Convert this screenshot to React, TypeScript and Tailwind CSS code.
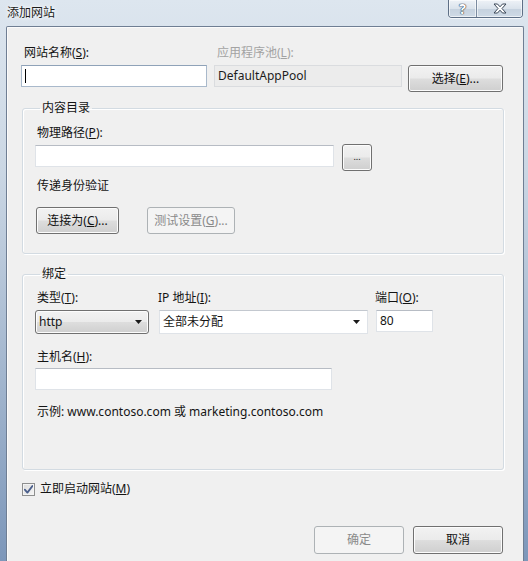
import React from "react";

const FONT = "font-['Noto_Sans','Noto_Sans_CJK_SC',sans-serif]";

function Btn({
  children,
  className = "",
  disabled = false,
}: {
  children: React.ReactNode;
  className?: string;
  disabled?: boolean;
}) {
  const base =
    "flex items-center justify-center rounded-[3px] border text-[12px] leading-[16px] ";
  const look = disabled
    ? "border-[#adb2b5] bg-[#f4f4f4] text-[#8a8a8a]"
    : "border-[#707070] bg-[linear-gradient(to_bottom,#f2f2f2_0%,#ebebeb_48%,#dddddd_52%,#cfcfcf_100%)] shadow-[inset_0_0_0_1px_#fcfcfc] text-[#111]";
  return <div className={base + look + " " + className}>{children}</div>;
}

function Arrow() {
  return (
    <svg width="7" height="4" viewBox="0 0 7 4" className="block">
      <path d="M0 0 H7 L3.5 4 Z" fill="#1a1a1a" />
    </svg>
  );
}

function Field({ className = "", children }: { className?: string; children?: React.ReactNode }) {
  return (
    <div
      className={
        "h-[22px] border border-[#dfe3e8] border-t-[#b7bcc4] bg-white text-[12px] leading-[20px] pl-[3px] " +
        className
      }
    >
      {children}
    </div>
  );
}

function Label({ children, className = "" }: { children: React.ReactNode; className?: string }) {
  return <div className={"text-[12px] leading-[16px] " + className}>{children}</div>;
}

export default function App() {
  return (
    <div
      className={
        FONT +
        " relative w-[528px] h-[561px] overflow-hidden flex flex-col text-[#141414] bg-[linear-gradient(to_bottom,#dde6ef_0%,#cbd7e4_30%,#9fb3cc_70%,#7d97ba_100%)]"
      }
    >
      {/* title bar */}
      <div className="h-[26px] flex items-start shrink-0">
        <div className="pl-[7px] pt-[5px] text-[12px] leading-[16px] text-[#1b1b1b] [text-shadow:0_0_6px_#ffffff,0_0_3px_#ffffff]">
          添加网站
        </div>
        <div className="ml-auto mr-[5px] flex h-[18px] rounded-b-[4px] border border-t-0 border-[#5e6f86] overflow-hidden shadow-[0_1px_0_#f4f7fb]">
          <div className="w-[28px] h-full flex items-center justify-center bg-[linear-gradient(to_bottom,#eef2f7_0%,#dbe3ec_50%,#c5d1de_51%,#cfdae6_100%)] border-r border-[#7b8ba0] shadow-[inset_0_0_0_1px_rgba(255,255,255,0.6)]">
            <span className="text-[14px] font-bold leading-none text-white [text-shadow:0_0_1px_#2f3b4b,0_0_1px_#2f3b4b,0_0_1px_#2f3b4b]">
              ?
            </span>
          </div>
          <div className="w-[45px] h-full flex items-center justify-center bg-[linear-gradient(to_bottom,#eef2f7_0%,#dbe3ec_50%,#c5d1de_51%,#cfdae6_100%)] shadow-[inset_0_0_0_1px_rgba(255,255,255,0.6)]">
            <svg width="14" height="11" viewBox="0 0 14 11">
              <path
                d="M1 1 H4.5 L7 3.8 L9.5 1 H13 L9 5.5 L13 10 H9.5 L7 7.2 L4.5 10 H1 L5 5.5 Z"
                fill="#ffffff"
                stroke="#3a4657"
                strokeWidth="1"
                strokeLinejoin="round"
              />
            </svg>
          </div>
        </div>
      </div>

      <div className="flex flex-1 min-h-0">
        <div className="w-[6px] shrink-0" />
        {/* client area */}
        <div className="flex-1 bg-[#f0f0f0] border border-b-0 border-[#6f7e93] rounded-t-[2px] shadow-[inset_1px_1px_0_#fbfbfb] pl-[14px] pr-[19px] pt-[18px]">
          {/* site name / app pool */}
          <div className="flex items-start">
            <div className="w-[186px]">
              <Label className="ml-[3px]">
                网站名称(<span className="underline">S</span>):
              </Label>
              <div className="mt-[4px] h-[22px] border border-[#a9b9cb] border-t-[#8fa2b8] bg-white flex items-center pl-[3px]">
                <div className="w-[1px] h-[14px] bg-black" />
              </div>
            </div>
            <div className="ml-[7px] w-[188px]">
              <Label className="ml-[3px] text-[#a3a3a3]">
                应用程序池(<span className="underline">L</span>):
              </Label>
              <div className="mt-[4px] h-[22px] border border-[#dadcdf] bg-[#ececec] pl-[3px] text-[12px] leading-[20px] text-[#1c1c1c]">
                DefaultAppPool
              </div>
            </div>
            <Btn className="ml-[6px] mt-[20px] w-[95px] h-[27px]">
              选择(<span className="underline">E</span>)...
            </Btn>
          </div>

          {/* content directory */}
          <fieldset className="mt-[8px] ml-[1px] border border-[#d3dbe2] rounded-[3px] shadow-[inset_1px_1px_0_#ffffff,1px_1px_0_#ffffff] px-[12px] pt-[9px] pb-[19px]">
            <legend className="ml-[5px] px-[2px] text-[12px] leading-[16px]">内容目录</legend>
            <Label className="ml-[2px]">
              物理路径(<span className="underline">P</span>):
            </Label>
            <div className="mt-[3px] flex items-start">
              <Field className="mt-[1px] w-[299px]" />
              <Btn className="ml-[8px] w-[30px] h-[27px]">
                <span className="text-[9px] leading-none pb-[2px]">...</span>
              </Btn>
            </div>
            <Label className="ml-[2px] mt-[7px]">传递身份验证</Label>
            <div className="mt-[13px] flex">
              <Btn className="ml-[1px] w-[83px] h-[27px]">
                连接为(<span className="underline">C</span>)...
              </Btn>
              <Btn disabled className="ml-[28px] w-[88px] h-[27px]">
                测试设置(<span className="underline">G</span>)...
              </Btn>
            </div>
          </fieldset>

          {/* bindings */}
          <fieldset className="mt-[12px] ml-[1px] border border-[#d3dbe2] rounded-[3px] shadow-[inset_1px_1px_0_#ffffff,1px_1px_0_#ffffff] px-[12px] pt-[8px] pb-[49px]">
            <legend className="ml-[5px] px-[2px] text-[12px] leading-[16px]">绑定</legend>
            <div className="flex items-start">
              <div className="w-[114px]">
                <Label className="ml-[2px]">
                  类型(<span className="underline">T</span>):
                </Label>
                <div className="mt-[4px] h-[24px] rounded-[3px] border border-[#707070] bg-[linear-gradient(to_bottom,#f2f2f2_0%,#ebebeb_48%,#dddddd_52%,#cfcfcf_100%)] shadow-[inset_0_0_0_1px_#fcfcfc] flex items-center pl-[3px] pr-[6px] text-[12px]">
                  <span>http</span>
                  <span className="ml-auto">
                    <Arrow />
                  </span>
                </div>
              </div>
              <div className="ml-[9px] w-[210px]">
                <Label>
                  IP 地址(<span className="underline">I</span>):
                </Label>
                <div className="mt-[4px] ml-[1px] h-[24px] border border-[#dfe3e8] border-t-[#c3c8cf] bg-white flex items-center pl-[3px] pr-[7px] text-[12px]">
                  <span>全部未分配</span>
                  <span className="ml-auto">
                    <Arrow />
                  </span>
                </div>
              </div>
              <div className="ml-[7px] w-[57px]">
                <Label>
                  端口(<span className="underline">O</span>):
                </Label>
                <Field className="mt-[4px] ml-[1px] w-[57px]">80</Field>
              </div>
            </div>
            <Label className="ml-[2px] mt-[15px]">
              主机名(<span className="underline">H</span>):
            </Label>
            <Field className="mt-[3px] w-[297px]" />
            <Label className="ml-[2px] mt-[14px]">示例: www.contoso.com 或 marketing.contoso.com</Label>
          </fieldset>

          {/* start now */}
          <div className="mt-[11px] flex items-center">
            <div className="ml-[1px] w-[13px] h-[13px] border border-[#8e8f8f] bg-[linear-gradient(135deg,#dcdcdc_0%,#f6f6f6_100%)] shadow-[inset_0_0_0_1px_#f4f4f4] flex items-center justify-center">
              <svg width="9" height="9" viewBox="0 0 9 9">
                <path
                  d="M0.8 4.6 L3.4 7.6 L8.4 1"
                  fill="none"
                  stroke="#4b5f8c"
                  strokeWidth="1.8"
                  strokeLinecap="round"
                  strokeLinejoin="round"
                />
              </svg>
            </div>
            <Label className="ml-[5px]">
              立即启动网站(<span className="underline">M</span>)
            </Label>
          </div>

          {/* dialog buttons */}
          <div className="mt-[29px] flex justify-end gap-[9px] mr-[1px]">
            <Btn disabled className="w-[90px] h-[28px]">
              确定
            </Btn>
            <Btn className="w-[90px] h-[28px]">取消</Btn>
          </div>
        </div>
        <div className="w-[4px] shrink-0" />
      </div>
    </div>
  );
}
